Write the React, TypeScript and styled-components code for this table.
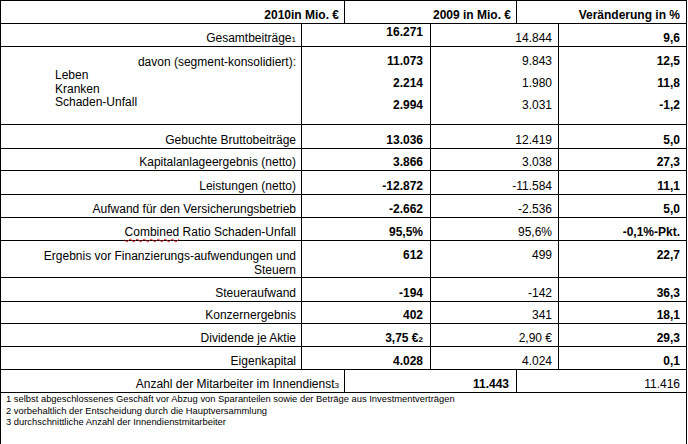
import React from "react";
import styled, { createGlobalStyle } from "styled-components";

const GlobalStyle = createGlobalStyle`
  html, body { margin: 0; padding: 0; background: #ffffff; }
  body {
    font-family: "Liberation Sans", Arial, sans-serif;
    font-size: 12px;
    color: #000000;
  }
`;

const Sheet = styled.div`
  width: 687px;
  box-sizing: border-box;
  border-left: 1px solid #000;
  border-top: 1px solid #000;
  font-family: "Liberation Sans", Arial, sans-serif;
  font-size: 12px;
  line-height: 14px;
`;

const WideRow = styled.div<{ $h: number }>`
  display: grid;
  grid-template-columns: 344px 172px 170px;
  height: ${(p) => p.$h}px;
  box-sizing: border-box;
  border-bottom: 1px solid #000;
`;

const Row = styled.div<{ $h: number }>`
  display: grid;
  grid-template-columns: 301px 129px 128px 128px;
  height: ${(p) => p.$h}px;
  box-sizing: border-box;
  border-bottom: 1px solid #000;
`;

const Cell = styled.div<{ $bold?: boolean; $top?: number; $pr?: number }>`
  box-sizing: border-box;
  border-right: 1px solid #000;
  display: flex;
  flex-direction: column;
  justify-content: ${(p) => (p.$top !== undefined ? "flex-start" : "flex-end")};
  align-items: flex-end;
  text-align: right;
  padding-right: ${(p) => p.$pr ?? 6}px;
  padding-top: ${(p) => p.$top ?? 0}px;
  padding-bottom: 1px;
  font-weight: ${(p) => (p.$bold ? 700 : 400)};
  white-space: nowrap;
`;

const StackCell = styled(Cell)`
  line-height: 22px;
`;

const LabelBlock = styled.div`
  display: flex;
  flex-direction: column;
  align-self: stretch;
  line-height: 13.4px;
`;

const RightLine = styled.div`
  text-align: right;
`;

const IndentLine = styled.div`
  text-align: left;
  padding-left: 54px;
`;

const Sub = styled.span`
  font-size: 8px;
  line-height: 0;
`;

const Spell = styled.span`
  text-decoration: underline wavy #e0282a;
  text-decoration-thickness: 1px;
  text-underline-offset: 2px;
`;

const Notes = styled.div`
  box-sizing: border-box;
  height: 60px;
  border-right: 1px solid #000;
  padding: 0 0 0 5px;
  font-size: 9.4px;
  line-height: 11.7px;
`;

type Item = {
  label: React.ReactNode;
  a: React.ReactNode;
  b: string;
  c: string;
  h: number;
  top?: boolean;
};

const items: Item[] = [
  { label: "Gebuchte Bruttobeiträge", a: "13.036", b: "12.419", c: "5,0", h: 24 },
  { label: "Kapitalanlageergebnis (netto)", a: "3.866", b: "3.038", c: "27,3", h: 22 },
  { label: "Leistungen (netto)", a: "-12.872", b: "-11.584", c: "11,1", h: 24 },
  { label: "Aufwand für den Versicherungsbetrieb", a: "-2.662", b: "-2.536", c: "5,0", h: 23 },
  {
    label: (
      <span>
        <Spell>Combined</Spell> Ratio Schaden-Unfall
      </span>
    ),
    a: "95,5%",
    b: "95,6%",
    c: "-0,1%-Pkt.",
    h: 23,
  },
  {
    label: (
      <span>
        Ergebnis vor Finanzierungs-aufwendungen und
        <br />
        Steuern
      </span>
    ),
    a: "612",
    b: "499",
    c: "22,7",
    h: 37,
    top: true,
  },
  { label: "Steueraufwand", a: "-194", b: "-142", c: "36,3", h: 24 },
  { label: "Konzernergebnis", a: "402", b: "341", c: "18,1", h: 22 },
  {
    label: "Dividende je Aktie",
    a: (
      <span>
        3,75 €<Sub>2</Sub>
      </span>
    ),
    b: "2,90 €",
    c: "29,3",
    h: 23,
  },
  { label: "Eigenkapital", a: "4.028", b: "4.024", c: "0,1", h: 23 },
];

export default function App() {
  return (
    <>
      <GlobalStyle />
      <Sheet>
        <WideRow $h={23}>
          <Cell $bold $pr={5}>2010in Mio. €</Cell>
          <Cell $bold $pr={5}>2009 in Mio. €</Cell>
          <Cell $bold>Veränderung in %</Cell>
        </WideRow>

        <Row $h={23}>
          <Cell $pr={5}>
            <span>
              Gesamtbeiträge<Sub>1</Sub>
            </span>
          </Cell>
          <Cell $bold $pr={7} $top={1}>16.271</Cell>
          <Cell>14.844</Cell>
          <Cell $bold>9,6</Cell>
        </Row>

        <Row $h={78}>
          <Cell $pr={5} $top={9}>
            <LabelBlock>
              <RightLine>davon (segment-konsolidiert):</RightLine>
              <IndentLine>Leben</IndentLine>
              <IndentLine>Kranken</IndentLine>
              <IndentLine>Schaden-Unfall</IndentLine>
            </LabelBlock>
          </Cell>
          <StackCell $bold $pr={7} $top={3}>
            <div>11.073</div>
            <div>2.214</div>
            <div>2.994</div>
          </StackCell>
          <StackCell $top={3}>
            <div>9.843</div>
            <div>1.980</div>
            <div>3.031</div>
          </StackCell>
          <StackCell $bold $top={3}>
            <div>12,5</div>
            <div>11,8</div>
            <div>-1,2</div>
          </StackCell>
        </Row>

        {items.map((it, i) => (
          <Row key={i} $h={it.h}>
            <Cell $pr={5} $top={it.top ? 8 : undefined}>
              {it.label}
            </Cell>
            <Cell $bold $pr={7} $top={it.top ? 7 : undefined}>
              {it.a}
            </Cell>
            <Cell $top={it.top ? 7 : undefined}>{it.b}</Cell>
            <Cell $bold $top={it.top ? 7 : undefined}>
              {it.c}
            </Cell>
          </Row>
        ))}

        <WideRow $h={23}>
          <Cell $pr={5}>
            <span>
              Anzahl der Mitarbeiter im Innendienst<Sub>3</Sub>
            </span>
          </Cell>
          <Cell $bold $pr={7}>11.443</Cell>
          <Cell>11.416</Cell>
        </WideRow>

        <Notes>
          <div>
            1 selbst abgeschlossenes Geschäft vor Abzug von Sparanteilen sowie der Beträge aus
            Investmentverträgen
          </div>
          <div>2 vorbehaltlich der Entscheidung durch die Hauptversammlung</div>
          <div>3 durchschnittliche Anzahl der Innendienstmitarbeiter</div>
        </Notes>
      </Sheet>
    </>
  );
}
